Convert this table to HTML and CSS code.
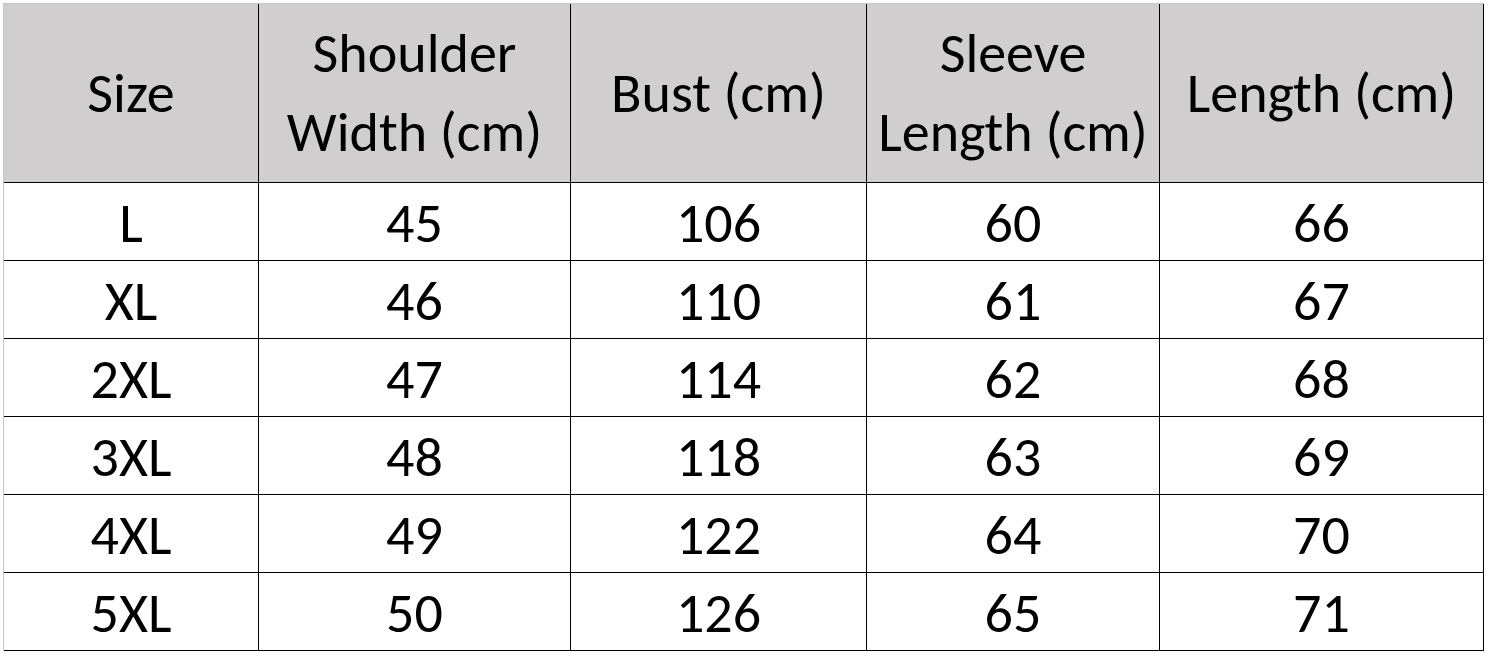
FILE: index.html
```html
<!DOCTYPE html>
<html lang="en">
<head>
<meta charset="utf-8">
<title>Size Chart</title>
<link rel="stylesheet" href="styles.css">
</head>
<body>
<div class="sheet">
  <div class="chart">
    <div class="cell head">Size</div>
    <div class="cell head">Shoulder<br>Width (cm)</div>
    <div class="cell head">Bust (cm)</div>
    <div class="cell head">Sleeve<br>Length (cm)</div>
    <div class="cell head">Length (cm)</div>

    <div class="cell">L</div><div class="cell">45</div><div class="cell">106</div><div class="cell">60</div><div class="cell">66</div>
    <div class="cell">XL</div><div class="cell">46</div><div class="cell">110</div><div class="cell">61</div><div class="cell">67</div>
    <div class="cell">2XL</div><div class="cell">47</div><div class="cell">114</div><div class="cell">62</div><div class="cell">68</div>
    <div class="cell">3XL</div><div class="cell">48</div><div class="cell">118</div><div class="cell">63</div><div class="cell">69</div>
    <div class="cell">4XL</div><div class="cell">49</div><div class="cell">122</div><div class="cell">64</div><div class="cell">70</div>
    <div class="cell">5XL</div><div class="cell">50</div><div class="cell">126</div><div class="cell">65</div><div class="cell">71</div>
  </div>
</div>
</body>
</html>
```
FILE: styles.css
```css
html, body {
  margin: 0;
  padding: 0;
  background: #ffffff;
}

body {
  font-family: "Carlito", "Lato", "Liberation Sans", sans-serif;
  color: #000000;
}

.sheet {
  padding: 3px 0 0 3px;
}

.chart {
  display: grid;
  grid-template-columns: 255px 312px 296px 293px 324px;
  grid-template-rows: 179px repeat(6, 78px);
  width: max-content;
  border-left: 1px solid #c6c6c6;
  border-top: 1px solid #c6c6c6;
}

.cell {
  box-sizing: border-box;
  border-right: 1px solid #000000;
  border-bottom: 1px solid #000000;
  display: flex;
  align-items: center;
  justify-content: center;
  text-align: center;
  white-space: nowrap;
  font-size: 56px;
  line-height: 70px;
  padding-top: 2px;
}

.head {
  background: #d0cece;
  line-height: 79px;
  padding-top: 0;
}
```
